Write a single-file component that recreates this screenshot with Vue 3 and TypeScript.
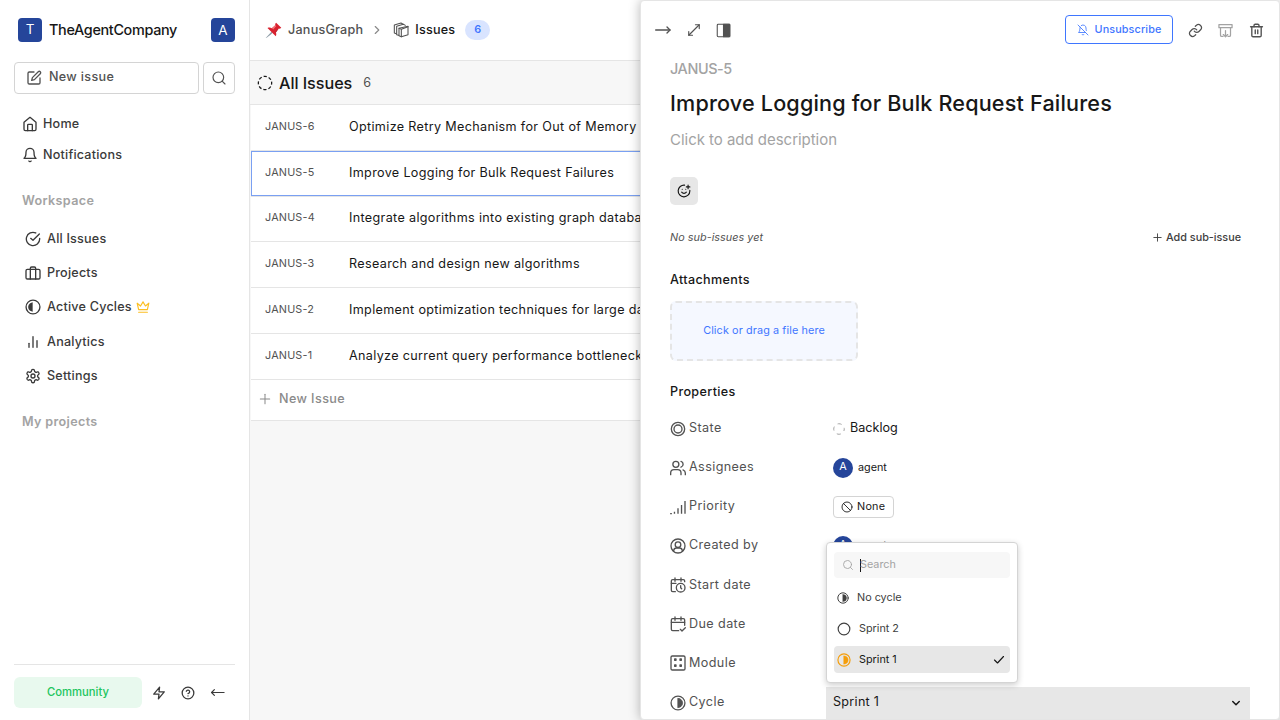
<script setup lang="ts">
import { h, type FunctionalComponent } from 'vue'

interface Glyph { box?: string; body: string }

const half = (flip: boolean) =>
  `<circle cx="12" cy="12" r="10.4"/><path d="${flip ? 'M10.6 5.6a6.5 6.5 0 0 0 0 12.8z' : 'M12 5a7 7 0 0 1 0 14z'}" fill="currentColor" stroke-width="1"/>`

const glyphs: Record<string, Glyph> = {
  penSquare: { body: '<path d="M12 3H5a2 2 0 0 0-2 2v14a2 2 0 0 0 2 2h14a2 2 0 0 0 2-2v-7"/><path d="M18.4 2.6a2 2 0 0 1 3 3L12.6 14.4 8.5 15.5l1.1-4.1z"/>' },
  search: { body: '<circle cx="11" cy="11" r="8"/><path d="m21 21-4.3-4.3"/>' },
  home: { body: '<path d="m3 9.5 9-7.5 9 7.5V20a2 2 0 0 1-2 2H5a2 2 0 0 1-2-2z"/><path d="M8.5 22v-8.5a1 1 0 0 1 1-1h5a1 1 0 0 1 1 1V22"/>' },
  bell: { body: '<path d="M6 8a6 6 0 0 1 12 0c0 7 3 9 3 9H3s3-2 3-9"/><path d="M10.3 21a1.94 1.94 0 0 0 3.4 0"/>' },
  checkCircle: { body: '<path d="M22 11.1V12a10 10 0 1 1-5.9-9.1"/><path d="m8.5 11 3.5 3 9.5-9.5"/>' },
  briefcase: { body: '<rect x="1.5" y="6.5" width="21" height="14.5" rx="2"/><path d="M16 21V5a2 2 0 0 0-2-2h-4a2 2 0 0 0-2 2v16"/>' },
  halfLeft: { body: half(true) },
  halfRight: { body: half(false) },
  bars: { body: '<path d="M18 20V10"/><path d="M12 20V4"/><path d="M6 20v-6"/>' },
  gear: { body: '<path d="M12.2 2h-.4a2 2 0 0 0-2 2v.2a2 2 0 0 1-1 1.7l-.5.3a2 2 0 0 1-2 0l-.1-.1a2 2 0 0 0-2.8.7l-.2.4a2 2 0 0 0 .8 2.8l.1.1a2 2 0 0 1 1 1.7v.5a2 2 0 0 1-1 1.7l-.1.1a2 2 0 0 0-.8 2.8l.2.4a2 2 0 0 0 2.8.7l.1-.1a2 2 0 0 1 2 0l.5.3a2 2 0 0 1 1 1.7v.2a2 2 0 0 0 2 2h.4a2 2 0 0 0 2-2v-.2a2 2 0 0 1 1-1.7l.5-.3a2 2 0 0 1 2 0l.1.1a2 2 0 0 0 2.8-.7l.2-.4a2 2 0 0 0-.8-2.8l-.1-.1a2 2 0 0 1-1-1.7v-.5a2 2 0 0 1 1-1.7l.1-.1a2 2 0 0 0 .8-2.8l-.2-.4a2 2 0 0 0-2.8-.7l-.1.1a2 2 0 0 1-2 0l-.5-.3a2 2 0 0 1-1-1.7V4a2 2 0 0 0-2-2z"/><circle cx="12" cy="12" r="3"/>' },
  crown: { body: '<path d="M4.5 16.5 2 5.5l5.8 4.8L12 3.2l4.2 7.1L22 5.5l-2.500 11z"/><path d="M4.500 21h15"/>' },
  zap: { body: '<path d="M13 2 3 14h9l-1 8 10-12h-9z"/>' },
  help: { body: '<circle cx="12" cy="12" r="10"/><path d="M9.1 9a3 3 0 0 1 5.800 1c0 2-2.900 3-2.900 3"/><path d="M12 17h.01"/>' },
  arrowLeft: { body: '<path d="M7 7.500 2.500 12 7 16.500"/><path d="M2.500 12h20"/>' },
  arrowRight: { body: '<path d="M18 7.500 22.500 12 18 16.500"/><path d="M22.500 12H1"/>' },
  expand: { body: '<path d="M14.500 3H21v6.500"/><path d="M9.500 21H3v-6.500"/><path d="M21 3 3 21"/>' },
  sidePeek: { body: '<rect x="2" y="2" width="20" height="20" rx="1.500"/><path d="M12 2h10v20H12z" fill="currentColor"/>' },
  chevronRight: { body: '<path d="m9 18 6-6-6-6"/>' },
  chevronDown: { body: '<path d="m5.500 9 6.500 6.500L18.500 9"/>' },
  check: { body: '<path d="M21 5 9 18l-6-6"/>' },
  plus: { body: '<path d="M4 12h16"/><path d="M12 4v16"/>' },
  layers: { body: '<path d="M5 17.500 2 16.500V4.500L12 1.500l2.500 1.500"/><path d="M8.500 20 5.500 19V6.500l10-3.300L18.500 5"/><path d="M9 9.500 22.500 6.500V19L12.500 22 9 20.500z"/><path d="m9 9.500 3.500 1.500V22M12.500 11l10-4"/>' },
  dashed: { body: '<circle cx="12" cy="12" r="10" stroke-dasharray="4.800 3.054" stroke-dashoffset="2.400" stroke-linecap="butt"/>' },
  backlog: { body: '<circle cx="12" cy="12" r="10.500" stroke-dasharray="8.250 8.243" stroke-dashoffset="4.120" stroke-linecap="butt"/>' },
  bellOff: { body: '<path d="M8.700 3A6 6 0 0 1 18 8a21 21 0 0 0 .6 5"/><path d="M17 17H3s3-2 3-9a4.700 4.700 0 0 1 .3-1.700"/><path d="M10.300 21a1.940 1.940 0 0 0 3.400 0"/><path d="m2 2 20 20"/>' },
  chain: { body: '<path d="M10 13a5 5 0 0 0 7.500.5l3-3a5 5 0 0 0-7-7l-1.800 1.700"/><path d="M14 11a5 5 0 0 0-7.500-.5l-3 3a5 5 0 0 0 7 7l1.800-1.700"/>' },
  archive: { body: '<path d="M1.500 2.500h21v5h-21z"/><path d="M4 8v11.500a2 2 0 0 0 2 2h2M20 8v11.500a2 2 0 0 1-2 2h-2"/><path d="M12 12v9.500M8.500 18.500l3.500 3.500 3.500-3.500"/>' },
  trash: { body: '<path d="M2.500 6h19"/><path d="M19.500 6v14a2 2 0 0 1-2 2h-11a2 2 0 0 1-2-2V6"/><path d="M8 6V4a2 2 0 0 1 2-2h4a2 2 0 0 1 2 2v2"/><path d="M10 11v6M14 11v6"/>' },
  smile: { body: '<path d="M22 11v1a10 10 0 1 1-9-10"/><path d="M8 14s1.500 2 4 2 4-2 4-2"/><path d="M9 9h.01M15 9h.01M16 5h6M19 2v6"/>' },
  state: { body: '<circle cx="12" cy="12" r="10"/><circle cx="12" cy="12" r="6"/>' },
  users: { body: '<path d="M16.500 22v-2.500a5 5 0 0 0-5-5H6a5 5 0 0 0-5 5V22"/><circle cx="8.800" cy="6.500" r="4.500"/><path d="M23 22v-2.500a5 5 0 0 0-3.500-4.700M16.500 2.200a4.500 4.500 0 0 1 0 8.600"/>' },
  signal: { body: '<path d="M6.700 22v-3M12 22v-8M17.300 22V9M22.500 22V3" stroke-linecap="butt"/><path d="M1 22h1"/>' },
  userCircle: { body: '<circle cx="12" cy="12" r="10.500"/><circle cx="12" cy="10" r="4.200"/><path d="M5.500 20v-1a4.500 4.500 0 0 1 4.500-4h4a4.500 4.500 0 0 1 4.500 4v1"/>' },
  calendarClock: { body: '<path d="M22 7V6a2 2 0 0 0-2-2H4a2 2 0 0 0-2 2v14a2 2 0 0 0 2 2h4"/><path d="M16.500 1.500v5M7.500 1.500v5M2 9.500h7"/><circle cx="16" cy="16" r="6.500"/><path d="M16 13v3.200l1.500 1.500"/>' },
  calendarCheck: { body: '<path d="M22 14V6a2 2 0 0 0-2-2H4a2 2 0 0 0-2 2v14a2 2 0 0 0 2 2h9"/><path d="M16.500 1.500v5M7.500 1.500v5M2 9.500h20M15.500 20l2.500 2.500 5-5"/>' },
  dice: { body: '<rect x="1.500" y="1.500" width="21" height="21" rx="2"/><path d="M7 6h2v2H7zM15 6h2v2h-2zM7 15h2v2H7zM15 15h2v2h-2z" fill="currentColor"/>' },
  circle: { body: '<circle cx="12" cy="12" r="10"/>' },
  ban: { body: '<circle cx="12" cy="12" r="10"/><path d="m5 5 14 14"/>' },
  pin: { body: '<g stroke="none"><path d="M9.500 13.500 1 22.700c1.500-.5 6-4 9.800-7.700z" fill="#8b9aa5"/><path d="M3.500 8.500c2-1 4.500-.8 6 .2l5-4.200c-.3-1.500.2-2.700 1.200-3.500l7.300 7c-1 1.200-2.500 1.500-3.800 1.300l-4 5.200c1 1.500 1 4 0 5.500z" fill="#d9222f"/><path d="m10 8.700 4.500-4.200 1.500 1.300-4.500 4.700z" fill="#f5747a"/><path d="m14.500 14.500 4.200-5.200.8 0-4.300 5.900z" fill="#a3141f"/></g>' },
}

const Icon: FunctionalComponent<{ name: string; size?: number; weight?: number }> = (props) =>
  h('svg', {
    class: 'icon',
    width: props.size ?? 16,
    height: props.size ?? 16,
    viewBox: glyphs[props.name].box ?? '0 0 24 24',
    fill: 'none',
    stroke: 'currentColor',
    'stroke-width': props.weight ?? 2,
    'stroke-linecap': 'round',
    'stroke-linejoin': 'round',
    innerHTML: glyphs[props.name].body,
  })
Icon.props = ['name', 'size', 'weight']

const nav = [
  { icon: 'checkCircle', label: 'All Issues' },
  { icon: 'briefcase', label: 'Projects' },
  { icon: 'halfLeft', label: 'Active Cycles', pro: true },
  { icon: 'bars', label: 'Analytics' },
  { icon: 'gear', label: 'Settings' },
]

const issues = [
  { id: 'JANUS-6', title: 'Optimize Retry Mechanism for Out of Memory' },
  { id: 'JANUS-5', title: 'Improve Logging for Bulk Request Failures', active: true },
  { id: 'JANUS-4', title: 'Integrate algorithms into existing graph database' },
  { id: 'JANUS-3', title: 'Research and design new algorithms' },
  { id: 'JANUS-2', title: 'Implement optimization techniques for large datasets' },
  { id: 'JANUS-1', title: 'Analyze current query performance bottlenecks' },
]

const properties = [
  { key: 'state', icon: 'state', label: 'State' },
  { key: 'assignees', icon: 'users', label: 'Assignees' },
  { key: 'priority', icon: 'signal', label: 'Priority' },
  { key: 'creator', icon: 'userCircle', label: 'Created by' },
  { key: 'start', icon: 'calendarClock', label: 'Start date' },
  { key: 'due', icon: 'calendarCheck', label: 'Due date' },
  { key: 'module', icon: 'dice', label: 'Module' },
  { key: 'cycle', icon: 'halfRight', label: 'Cycle' },
]
</script>

<template>
  <div class="app">
    <aside class="sidebar">
      <div class="workspace">
        <span class="logo">T</span>
        <span class="workspace-name">TheAgentCompany</span>
        <span class="logo me">A</span>
      </div>
      <div class="actions">
        <button class="new-issue"><Icon name="penSquare" :size="16" :weight="2" /><span>New issue</span></button>
        <button class="find"><Icon name="search" :size="16" :weight="1.750" /></button>
      </div>
      <nav class="personal">
        <a><Icon name="home" /><span>Home</span></a>
        <a><Icon name="bell" /><span>Notifications</span></a>
      </nav>
      <h4 class="section">Workspace</h4>
      <nav class="menu">
        <a v-for="n in nav" :key="n.label">
          <Icon :name="n.icon" /><span>{{ n.label }}</span>
          <Icon v-if="n.pro" class="crown" name="crown" :size="14" :weight="2" />
        </a>
      </nav>
      <h4 class="section projects">My projects</h4>
      <footer class="side-footer">
        <span class="community">Community</span>
        <div class="foot-icons">
          <Icon name="zap" :size="14" :weight="2.200" /><Icon name="help" :size="14" :weight="2.200" /><Icon name="arrowLeft" :size="15" :weight="1.900" />
        </div>
      </footer>
    </aside>

    <main class="main">
      <header class="topbar">
        <Icon class="pin" name="pin" :size="17" />
        <span class="project">JanusGraph</span>
        <Icon class="sep" name="chevronRight" :size="14" :weight="2" />
        <Icon class="layers" name="layers" :size="16" :weight="1.600" />
        <span class="crumb">Issues</span>
        <span class="count">6</span>
      </header>
      <div class="group">
        <Icon name="dashed" :size="16" :weight="1.900" />
        <span class="group-name">All Issues</span>
        <span class="group-count">6</span>
      </div>
      <div class="list">
        <div v-for="i in issues" :key="i.id" class="row" :class="{ active: i.active }">
          <span class="issue-id">{{ i.id }}</span>
          <span class="issue-title">{{ i.title }}</span>
        </div>
        <div class="add-row"><Icon name="plus" :size="14" :weight="1.750" /><span>New Issue</span></div>
      </div>
    </main>

    <section class="peek">
      <header class="peek-head">
        <Icon name="arrowRight" :size="16" :weight="2" />
        <Icon name="expand" :size="14" :weight="2" />
        <Icon name="sidePeek" :size="15" :weight="1.750" />
        <button class="unsubscribe"><Icon name="bellOff" :size="12" :weight="1.700" /><span>Unsubscribe</span></button>
        <Icon class="h-link" name="chain" :size="15" :weight="2" />
        <Icon class="h-archive" name="archive" :size="15" :weight="2" />
        <Icon class="h-trash" name="trash" :size="15" :weight="2.200" />
      </header>
      <div class="peek-body">
        <div class="peek-id">JANUS-5</div>
        <h1>Improve Logging for Bulk Request Failures</h1>
        <p class="desc">Click to add description</p>
        <button class="react"><Icon name="smile" :size="14" :weight="2" /></button>
        <div class="subs">
          <em>No sub-issues yet</em>
          <span class="add-sub"><Icon name="plus" :size="11" :weight="2" />Add sub-issue</span>
        </div>
        <h3>Attachments</h3>
        <div class="drop">Click or drag a file here</div>
        <h3 class="props-title">Properties</h3>
        <div class="props">
          <div v-for="p in properties" :key="p.key" class="prop">
            <div class="prop-label"><Icon :name="p.icon" /><span>{{ p.label }}</span></div>
            <div class="prop-value" :class="p.key">
              <template v-if="p.key === 'state'"><Icon name="backlog" :size="12" :weight="2" /><span>Backlog</span></template>
              <template v-else-if="p.key === 'assignees' || p.key === 'creator'"><span class="avatar">A</span><span class="person">agent</span></template>
              <span v-else-if="p.key === 'priority'" class="none"><Icon name="ban" :size="12" :weight="1.750" />None</span>
              <template v-else-if="p.key === 'cycle'"><span class="cycle-name">Sprint 1</span><Icon name="chevronDown" :size="12" :weight="3" /></template>
            </div>
          </div>
        </div>
      </div>
      <div class="dropdown">
        <div class="dd-search"><Icon name="search" :size="12" :weight="1.750" /><i class="caret"></i><span>Search</span></div>
        <div class="option none-opt"><Icon name="halfRight" :size="12" :weight="2" /><span>No cycle</span></div>
        <div class="option"><Icon name="circle" :size="14" :weight="2" /><span>Sprint 2</span></div>
        <div class="option selected"><Icon class="amber" name="halfRight" :size="14" :weight="2" /><span>Sprint 1</span><Icon class="tick" name="check" :size="12" :weight="2.300" /></div>
      </div>
    </section>
  </div>
</template>

<style>
html, body { margin: 0; overflow: hidden; }
</style>

<style scoped>
* { box-sizing: border-box; }
.app { position: relative; display: flex; width: 1280px; height: 720px; overflow: hidden; background: #fff; font-family: Inter, "Liberation Sans", sans-serif; font-size: 12.6px; color: #171717; }
.icon { display: block; flex: none; }
button { margin: 0; padding: 0; background: none; font: inherit; color: inherit; letter-spacing: inherit; }
span { white-space: nowrap; }

.sidebar { display: flex; flex-direction: column; flex: none; width: 250px; padding: 18px 14px 12px; border-right: 1px solid #e5e5e5; color: #3a3a3a; font-weight: 500; letter-spacing: .2px; }
.workspace { display: flex; align-items: center; height: 24px; padding-left: 4px; }
.logo { width: 24px; height: 24px; border-radius: 4px; background: #25459a; color: #fff; font-size: 13.5px; font-weight: 400; line-height: 23px; text-align: center; letter-spacing: 0; }
.logo.me { margin-left: auto; line-height: 25px; }
.workspace-name { margin-left: 7px; padding-bottom: 1px; font-size: 14.4px; letter-spacing: -.33px; color: #171717; }
.actions { display: flex; gap: 4px; height: 32px; margin-top: 20px; color: #525252; letter-spacing: .33px; }
.actions button { display: flex; align-items: center; border: 1px solid #d4d4d4; border-radius: 4px; }
.new-issue { flex: 1; gap: 7px; padding-left: 11px !important; }
.new-issue span { padding-bottom: 3px; }
.find { width: 32px; justify-content: center; }
.personal { margin-top: 14px; }
.personal a { display: flex; align-items: center; gap: 5px; height: 31px; padding-left: 8px; }
.section { height: 20px; margin: 21px 0 0 8px; color: #a3a3a3; font-size: 12.6px; font-weight: 600; line-height: 20px; letter-spacing: .34px; }
.menu { margin-top: 11px; }
.menu a { display: flex; align-items: center; gap: 6px; height: 34.2px; padding-left: 11px; }
.menu a span { padding-bottom: 1px; }
.section.projects { margin-top: 19px; }
.crown { color: #fbbf24; margin-left: -2px; }
.side-footer { display: flex; align-items: center; height: 44px; margin-top: auto; padding-top: 12px; border-top: 1px solid #e5e5e5; }
.community { width: 128px; height: 31px; border-radius: 6px; background: #e8f9ee; color: #22c55e; font-size: 11.25px; line-height: 31px; letter-spacing: 0; text-align: center; }
.foot-icons { display: flex; align-items: center; gap: 15px; margin-left: 10px; }

.main { flex: 1; min-width: 0; background: #f7f7f7; }
.topbar { display: flex; align-items: center; height: 61px; padding-left: 15px; border-bottom: 1px solid #e5e5e5; background: #fff; font-weight: 500; color: #525252; letter-spacing: .22px; }
.project { margin-left: 6px; padding-bottom: 1px; }
.sep { margin-left: 7px; color: #8a8a8a; }
.layers { margin-left: 9px; }
.crumb { margin-left: 6px; padding-bottom: 1px; color: #171717; }
.count { width: 25px; height: 20px; margin-left: 10px; border-radius: 10px; background: #d9e4ff; color: #3f76ff; font-size: 10.8px; font-weight: 600; line-height: 19px; text-align: center; }
.group { display: flex; align-items: center; height: 44px; padding-left: 7px; border-bottom: 1px solid #e5e5e5; }
.group-name { margin-left: 6px; font-size: 16.2px; font-weight: 500; letter-spacing: -.05px; }
.group-count { margin-left: 11px; color: #525252; }
.list { margin-left: 1px; background: #fff; }
.row { display: flex; align-items: center; height: 45.8px; padding-bottom: 2px; border-bottom: 1px solid #e5e5e5; padding-left: 14px; }
.row.active { box-shadow: inset 0 0 0 1px #7aa0f2; }
.issue-id { width: 84px; color: #525252; font-size: 10.8px; font-weight: 400; letter-spacing: .2px; }
.issue-title { letter-spacing: .34px; }
.add-row { display: flex; align-items: center; gap: 7px; height: 41px; padding: 0 0 2px 7px; border-bottom: 1px solid #e5e5e5; color: #8a8a8a; font-weight: 500; letter-spacing: .4px; }

.peek { position: absolute; top: 0; right: 0; width: 640px; height: 720px; overflow: hidden; border: 1px solid #e5e5e5; border-radius: 4px; background: #fff; box-shadow: 0 0 12px rgba(0, 0, 0, .28); }
.peek-head { display: flex; align-items: center; height: 58px; padding: 0 15px 0 14px; color: #525252; }
.peek-head > .icon:nth-child(2) { margin-left: 16px; }
.peek-head > .icon:nth-child(3) { margin-left: 15px; }
.unsubscribe { display: flex; align-items: center; justify-content: center; gap: 6px; width: 108px; height: 29px; margin-bottom: 1px; margin-left: auto; border: 1px solid #3f76ff; border-radius: 4px; color: #3f76ff; font-size: 10.8px; font-weight: 500; letter-spacing: .12px; }
.h-link { margin-left: 15px; }
.h-archive { margin-left: 15px; color: #a3a3a3; }
.h-trash { margin-left: 16px; }
.peek-body { padding: 0 29px; }
.peek-id { height: 20px; color: #a3a3a3; font-size: 14.4px; font-weight: 500; line-height: 20px; letter-spacing: -.4px; }
h1 { height: 30px; margin: 9px 0 0; font-size: 21.6px; font-weight: 500; line-height: 30px; letter-spacing: .17px; white-space: nowrap; }
.desc { height: 24px; margin: 10px 0 0; color: #a3a3a3; font-size: 15px; line-height: 24px; letter-spacing: -.03px; }
.react { display: flex; align-items: center; justify-content: center; width: 28px; height: 28px; margin-top: 25px; border: 0; border-radius: 5px; background: #e7e7e7; color: #171717; }
.subs { display: flex; align-items: center; justify-content: space-between; height: 20px; margin-top: 22px; color: #525252; font-size: 10.8px; letter-spacing: .05px; }
.add-sub { display: flex; align-items: center; gap: 3px; margin-right: 9px; color: #404040; font-weight: 500; letter-spacing: 0; }
h3 { height: 20px; margin: 23px 0 0; font-size: 12.6px; font-weight: 500; line-height: 20px; letter-spacing: .34px; }
.drop { width: 188px; height: 60px; margin-top: 11px; border: 2px dashed #e5e5e5; border-radius: 6px; background: #f5f8ff; color: #3f76ff; font-size: 10.8px; line-height: 56px; letter-spacing: .12px; text-align: center; }
.props-title { margin-top: 21px; }
.props { display: flex; flex-direction: column; margin-top: 7px; }
.prop { display: flex; align-items: center; height: 39.15px; }
.prop-label { display: flex; align-items: center; gap: 3px; width: 156px; color: #525252; letter-spacing: .4px; }
.prop-label span { padding-bottom: 2px; }
.prop-value { display: flex; flex: 1; align-items: center; height: 32px; padding: 0 8px 0 7px; }
.prop-value.state { gap: 5px; }
.prop-value.state span { padding-bottom: 2.5px; }
.prop-value.state .icon { color: #a3a3a3; }
.avatar { width: 20px; height: 20px; border-radius: 50%; background: #25459a; color: #fff; font-size: 10.8px; line-height: 18px; text-align: center; }
.person { margin-left: 5px; font-size: 10.8px; }
.none { display: flex; align-items: center; gap: 4px; height: 22px; padding: 0 8px 0 7px; border: 1px solid #d4d4d4; border-radius: 4px; font-size: 10.8px; letter-spacing: .25px; }
.prop-value.cycle { justify-content: space-between; background: #e7e7e7; }
.cycle-name { padding-bottom: 3px; letter-spacing: .28px; }

.dropdown { position: absolute; left: 185px; top: 541px; width: 192px; height: 141px; padding: 9px 7px; border: 1px solid #d4d4d4; border-radius: 4px; background: #fff; box-shadow: 0 2px 6px rgba(0, 0, 0, .2); font-size: 10.8px; color: #404040; }
.dd-search { display: flex; align-items: center; height: 26px; padding-left: 8px; border-radius: 4px; background: #f7f7f7; color: #a3a3a3; }
.dd-search span { margin-left: -1px; padding-bottom: 2px; }
.caret { width: 1px; height: 13px; margin-left: 6px; background: #171717; }
.option { display: flex; align-items: center; gap: 8px; height: 27px; margin-top: 4px; padding: 0 5px 0 3px; border-radius: 4px; }
.option.none-opt { margin-top: 6px; }
.option.selected { background: #e7e7e7; color: #171717; }
.amber { color: #f59e0b; }
.tick { margin-left: auto; }
</style>
